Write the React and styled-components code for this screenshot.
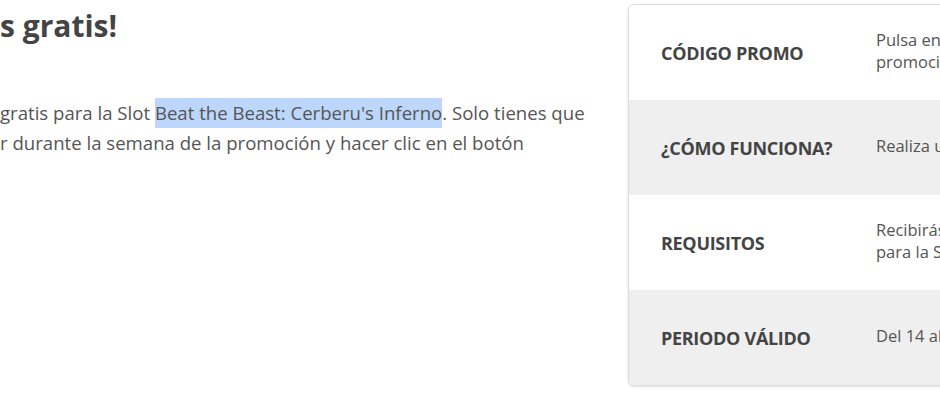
import styled, { createGlobalStyle } from 'styled-components';

const GlobalStyle = createGlobalStyle`
  html, body {
    margin: 0;
    padding: 0;
    background: #fff;
    overflow: hidden;
    width: 940px;
    height: 400px;
  }
  body {
    font-family: "Open Sans", "Noto Sans", sans-serif;
    color: #555;
  }
`;

const Page = styled.div`
  display: flex;
  align-items: flex-start;
  width: 940px;
  height: 400px;
  overflow: hidden;
`;

const Main = styled.div`
  width: 628px;
  flex-shrink: 0;
  padding-top: 6px;
`;

const Heading = styled.h2`
  margin: 0;
  font-size: 30px;
  font-weight: 700;
  line-height: 40px;
  color: #444;
`;

const Text = styled.p`
  margin: 52px 0 0;
  font-size: 18.6px;
  line-height: 29.5px;
  color: #555;
  white-space: nowrap;
`;

const Selected = styled.span`
  background: #bcd7fb;
  padding: 2px 0 3px;
`;

const Card = styled.div`
  margin-top: 4px;
  width: 520px;
  flex-shrink: 0;
  border: 1px solid #dcdcdc;
  border-radius: 6px;
  box-shadow: 0 1px 3px rgba(0, 0, 0, 0.12);
  overflow: hidden;
`;

const Row = styled.div`
  display: grid;
  grid-template-columns: 215px 1fr;
  align-items: center;
  height: 95px;
  padding-left: 32px;
  background: ${(p) => (p.$shade ? '#efefef' : '#fff')};
`;

const Label = styled.div`
  font-size: 18px;
  font-weight: 700;
  letter-spacing: -0.3px;
  color: #444;
`;

const Value = styled.div`
  font-size: 16.5px;
  line-height: 22px;
  color: #555;
  white-space: nowrap;
  margin-top: -4px;
`;

const rows = [
  { label: 'CÓDIGO PROMO', value: ['Pulsa en el botón de la', 'promoción para activarla'] },
  { label: '¿CÓMO FUNCIONA?', value: ['Realiza un depósito durante la semana'] },
  { label: 'REQUISITOS', value: ['Recibirás tiradas gratis', 'para la Slot Beat the Beast'] },
  { label: 'PERIODO VÁLIDO', value: ['Del 14 al 20 de octubre'] },
];

export default function App() {
  return (
    <>
      <GlobalStyle />
      <Page>
        <Main>
          <Heading>s gratis!</Heading>
          <Text>
            {' '}gratis para la Slot <Selected>Beat the Beast: Cerberu's Inferno</Selected>. Solo tienes que
            <br />
            r durante la semana de la promoción y hacer clic en el botón
          </Text>
        </Main>
        <Card>
          {rows.map((r, i) => (
            <Row key={r.label} $shade={i % 2 === 1}>
              <Label>{r.label}</Label>
              <Value>
                {r.value.map((v) => (
                  <div key={v}>{v}</div>
                ))}
              </Value>
            </Row>
          ))}
        </Card>
      </Page>
    </>
  );
}
